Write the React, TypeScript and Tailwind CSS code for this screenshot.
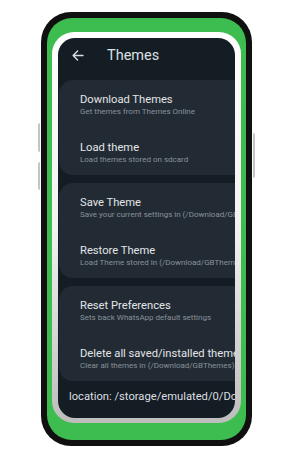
const groups = [
  [
    { title: "Download Themes", sub: "Get themes from Themes Online" },
    { title: "Load theme", sub: "Load themes stored on sdcard" },
  ],
  [
    { title: "Save Theme", sub: "Save your current settings in (/Download/GBThemes)" },
    { title: "Restore Theme", sub: "Load Theme stored in (/Download/GBThemes)" },
  ],
  [
    { title: "Reset Preferences", sub: "Sets back WhatsApp default settings" },
    { title: "Delete all saved/installed themes", sub: "Clear all themes in (/Download/GBThemes)" },
  ],
];

export default function App() {
  return (
    <div
      className="w-[285px] h-[462px] bg-white pt-[12px] pl-[41px]"
      style={{ fontFamily: "Roboto, 'Liberation Sans', sans-serif" }}
    >
      <div className="relative w-[211px] h-[434px] rounded-[30px] bg-[#101010] p-[6px]">
        {/* side buttons */}
        <div className="absolute left-[-3px] top-[111px] w-[2px] h-[29px] rounded-l bg-[#c4c4c4]" />
        <div className="absolute left-[-3px] top-[150px] w-[2px] h-[28px] rounded-l bg-[#c4c4c4]" />
        <div className="absolute right-[-3px] top-[121px] w-[2px] h-[45px] rounded-r bg-[#c4c4c4]" />

        <div className="w-full h-full rounded-[25px] bg-[#3dbd50] pt-[14px] pb-[17px] px-[5px]">
          <div className="w-full h-full rounded-[22px] bg-gradient-to-b from-white via-[#f2f2f2] to-[#bdbdbd] p-[6px] pb-[5px]">
            <div className="w-full h-full rounded-[17px] bg-[#141c24] overflow-hidden flex flex-col">
              <div className="flex items-center h-[42px] pb-[7px] pl-[14px]">
                <svg width="12" height="11" viewBox="0 0 12 11" fill="none" stroke="#d9dde0" strokeWidth="1.4" strokeLinecap="round" strokeLinejoin="round">
                  <path d="M11 5.5H1.2M5.6 1L1.1 5.5l4.5 4.5" />
                </svg>
                <span className="ml-[23px] text-[14.5px] leading-[18px] text-[#dce0e3]">Themes</span>
              </div>

              <div className="flex flex-col gap-[7px] w-[240px] pl-[1px]">
                {groups.map((g, i) => (
                  <div
                    key={i}
                    className={
                      "rounded-l-[14px] bg-[#222b34] " + (i === 0 ? "" : "mt-[1px]")
                    }
                  >
                    {g.map((it) => (
                      <div key={it.title} className="h-[47.5px] pl-[21px] pt-[13px] flex flex-col whitespace-nowrap">
                        <span className="text-[11.2px] leading-[14px] text-[#e2e5e7]">{it.title}</span>
                        <span className="text-[8px] leading-[10px] text-[#88919a]">{it.sub}</span>
                      </div>
                    ))}
                  </div>
                ))}
              </div>

              <div className="mt-[9px] pl-[11px] whitespace-nowrap text-[11.2px] leading-[14px] text-[#dcdfe2]">
                location: /storage/emulated/0/Download/GBThemes
              </div>
            </div>
          </div>
        </div>
      </div>
    </div>
  );
}
